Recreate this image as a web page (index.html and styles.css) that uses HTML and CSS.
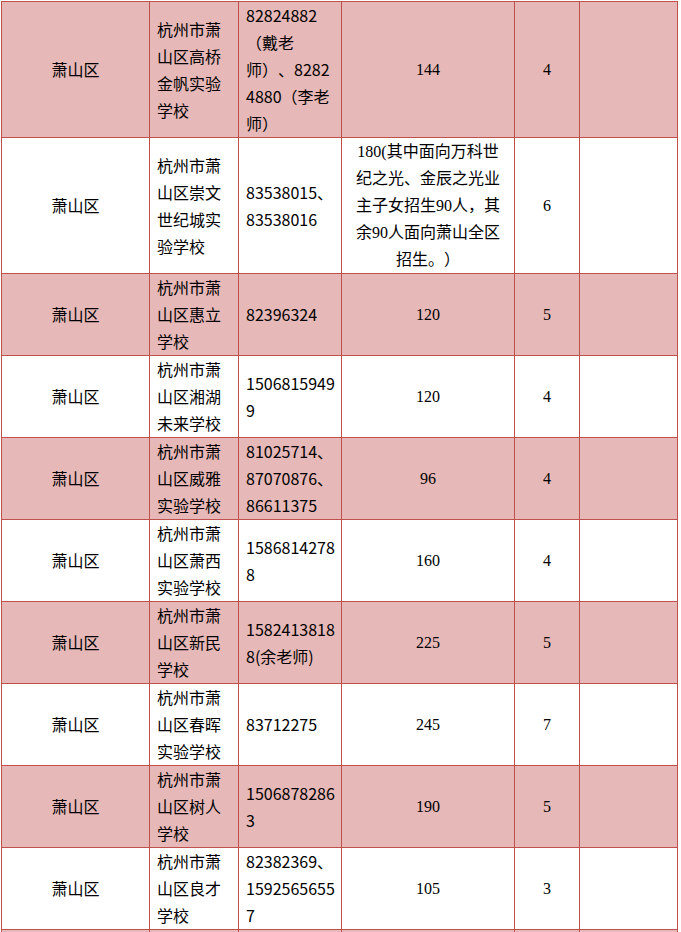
FILE: index.html
```html
<!DOCTYPE html>
<html lang="zh-CN">
<head>
<meta charset="utf-8">
<title>萧山区学校</title>
<link rel="stylesheet" href="styles.css">
</head>
<body>
<table class="tbl">
<colgroup>
<col class="c1"><col class="c2"><col class="c3"><col class="c4"><col class="c5"><col class="c6">
</colgroup>
<tbody>
<tr class="pink">
<td class="ctr">萧山区</td>
<td class="name">杭州市萧<br>山区高桥<br>金帆实验<br>学校</td>
<td class="tel">82824882<br>（戴老<br>师）、8282<br>4880（李老<br>师）</td>
<td class="num">144</td>
<td class="num">4</td>
<td></td>
</tr>
<tr>
<td class="ctr">萧山区</td>
<td class="name">杭州市萧<br>山区崇文<br>世纪城实<br>验学校</td>
<td class="tel">83538015、<br>83538016</td>
<td class="num">180(其中面向万科世<br>纪之光、金辰之光业<br>主子女招生90人，其<br>余90人面向萧山全区<br>招生。）</td>
<td class="num">6</td>
<td></td>
</tr>
<tr class="pink">
<td class="ctr">萧山区</td>
<td class="name">杭州市萧<br>山区惠立<br>学校</td>
<td class="tel">82396324</td>
<td class="num">120</td>
<td class="num">5</td>
<td></td>
</tr>
<tr>
<td class="ctr">萧山区</td>
<td class="name">杭州市萧<br>山区湘湖<br>未来学校</td>
<td class="tel">1506815949<br>9</td>
<td class="num">120</td>
<td class="num">4</td>
<td></td>
</tr>
<tr class="pink">
<td class="ctr">萧山区</td>
<td class="name">杭州市萧<br>山区威雅<br>实验学校</td>
<td class="tel">81025714、<br>87070876、<br>86611375</td>
<td class="num">96</td>
<td class="num">4</td>
<td></td>
</tr>
<tr>
<td class="ctr">萧山区</td>
<td class="name">杭州市萧<br>山区萧西<br>实验学校</td>
<td class="tel">1586814278<br>8</td>
<td class="num">160</td>
<td class="num">4</td>
<td></td>
</tr>
<tr class="pink">
<td class="ctr">萧山区</td>
<td class="name">杭州市萧<br>山区新民<br>学校</td>
<td class="tel">1582413818<br>8(余老师)</td>
<td class="num">225</td>
<td class="num">5</td>
<td></td>
</tr>
<tr>
<td class="ctr">萧山区</td>
<td class="name">杭州市萧<br>山区春晖<br>实验学校</td>
<td class="tel">83712275</td>
<td class="num">245</td>
<td class="num">7</td>
<td></td>
</tr>
<tr class="pink">
<td class="ctr">萧山区</td>
<td class="name">杭州市萧<br>山区树人<br>学校</td>
<td class="tel">1506878286<br>3</td>
<td class="num">190</td>
<td class="num">5</td>
<td></td>
</tr>
<tr>
<td class="ctr">萧山区</td>
<td class="name">杭州市萧<br>山区良才<br>学校</td>
<td class="tel">82382369、<br>1592565655<br>7</td>
<td class="num">105</td>
<td class="num">3</td>
<td></td>
</tr>
<tr class="pink tall">
<td></td><td></td><td></td><td></td><td></td><td></td>
</tr>
</tbody>
</table>
</body>
</html>
```
FILE: styles.css
```css
html, body {
  margin: 0;
  padding: 0;
  background: #ffffff;
}
body {
  padding: 1px 0 0 1px;
}
.tbl {
  border-collapse: collapse;
  table-layout: fixed;
  width: 677px;
  font-family: "Noto Sans CJK SC", sans-serif;
  font-size: 16px;
  line-height: 27px;
  color: #000;
  text-spacing-trim: space-all;
}
.c1 { width: 148px; }
.c2 { width: 89px; }
.c3 { width: 103px; }
.c4 { width: 173px; }
.c5 { width: 65px; }
.c6 { width: 98px; }
.tbl td {
  border: 1px solid #c0504d;
  padding: 0 7px;
  vertical-align: middle;
  white-space: nowrap;
  overflow: hidden;
}
.pink td {
  background: #e6b8b7;
}
.ctr {
  text-align: center;
}
.name, .tel {
  text-align: left;
}
.num {
  text-align: center;
  font-family: "Liberation Serif", "Noto Sans CJK SC", serif;
}
.tall td {
  height: 81px;
}
```
